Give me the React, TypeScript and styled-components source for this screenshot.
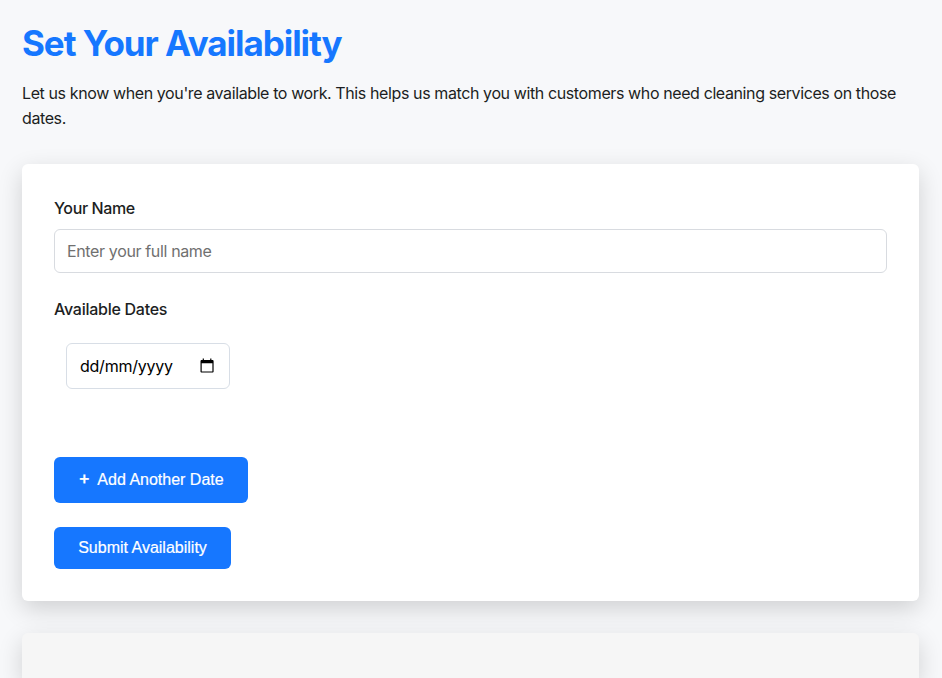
import React from "react";
import styled, { createGlobalStyle } from "styled-components";

const GlobalStyle = createGlobalStyle`
  *, *::before, *::after { box-sizing: border-box; }
  body {
    margin: 0;
    background: #f7f8fa;
    color: #1c1e22;
    font-family: Inter, "Liberation Sans", sans-serif;
    font-size: 16px;
    line-height: 25px;
  }
`;
const Page = styled.main`
  height: 678px;
  padding: 22px 23px 0 22px;
  overflow: hidden;
`;
const Title = styled.h1`
  margin: 0 0 16px;
  color: #1677ff;
  font-size: 35px;
  line-height: 43px;
  font-weight: 700;
  letter-spacing: -1.05px;
`;
const Intro = styled.p`
  margin: 0 0 33px;
  letter-spacing: -0.392px;
`;
const Card = styled.form`
  height: 437px;
  padding: 32px;
  border-radius: 6px;
  background: #fff;
  box-shadow: 0 8px 24px rgba(0, 0, 0, 0.16);
`;
const Label = styled.label<{ $spacing: number }>`
  display: block;
  height: 25px;
  margin-bottom: 8px;
  font-weight: 500;
  letter-spacing: ${(p) => p.$spacing}px;
`;
const NameInput = styled.input`
  display: block;
  width: 100%;
  height: 44px;
  margin-bottom: 24px;
  padding: 0 12px;
  border: 1px solid #d8dbe0;
  border-radius: 6px;
  background: #fff;
  font: inherit;
  letter-spacing: -0.36px;
  &::placeholder { color: #707070; opacity: 1; }
`;
const DateField = styled.div`
  display: flex;
  align-items: center;
  justify-content: space-between;
  width: 164px;
  height: 46px;
  margin: 21px 0 68px 12px;
  padding: 0 15px 0 13px;
  border: 1px solid #d8dee6;
  border-radius: 6px;
  color: #000;
  letter-spacing: -0.24px;
`;
const CalendarIcon = () => (
  <svg width="14" height="16" viewBox="0 0 14 16">
    <path
      fill="#000"
      fillRule="evenodd"
      d="M2.700 .6h1.200v1.300h6.300V.6h1.200v1.300h1c.7 0 1.200.5 1.200 1.200v10.300c0 .7-.5 1.200-1.200 1.200H1.700c-.7 0-1.200-.5-1.200-1.200V3.100c0-.7.5-1.200 1.200-1.200h1zM1.700 5.200v8.200h10.700V5.200z"
    />
  </svg>
);
const Button = styled.button<{ $height: number; $width: number }>`
  display: flex;
  align-items: center;
  justify-content: center;
  gap: 8px;
  width: ${(p) => p.$width}px;
  height: ${(p) => p.$height}px;
  margin: 0 0 24px;
  padding: 0 0 1px;
  border: 0;
  border-radius: 6px;
  background: #1677ff;
  color: #fff;
  font-family: "Liberation Sans", Arial, sans-serif;
  font-size: 16px;
  -webkit-text-stroke: 0.2px #fff;
`;
const Plus = styled.span`
  width: 11px;
  padding-bottom: 4px;
  font-family: Inter, sans-serif;
  font-size: 18px;
  line-height: 20px;
  font-weight: 500;
`;
const NextCard = styled.section`
  height: 45px;
  margin-top: 32px;
  border-radius: 6px 6px 0 0;
  background: #f6f6f6;
  box-shadow: 0 8px 24px rgba(0, 0, 0, 0.16);
`;

export default function App() {
  return (
    <>
      <GlobalStyle />
      <Page>
        <Title>Set Your Availability</Title>
        <Intro>
          Let us know when you're available to work. This helps us match you with customers who need cleaning services on those dates.
        </Intro>
        <Card>
          <Label htmlFor="name" $spacing={-0.38}>Your Name</Label>
          <NameInput id="name" placeholder="Enter your full name" />
          <Label as="div" $spacing={-0.26}>Available Dates</Label>
          <DateField>
            <span>dd/mm/yyyy</span>
            <CalendarIcon />
          </DateField>
          <Button type="button" $width={194} $height={46}>
            <Plus>+</Plus>
            <span>Add Another Date</span>
          </Button>
          <Button type="button" $width={177} $height={42}>Submit Availability</Button>
        </Card>
        <NextCard />
      </Page>
    </>
  );
}
